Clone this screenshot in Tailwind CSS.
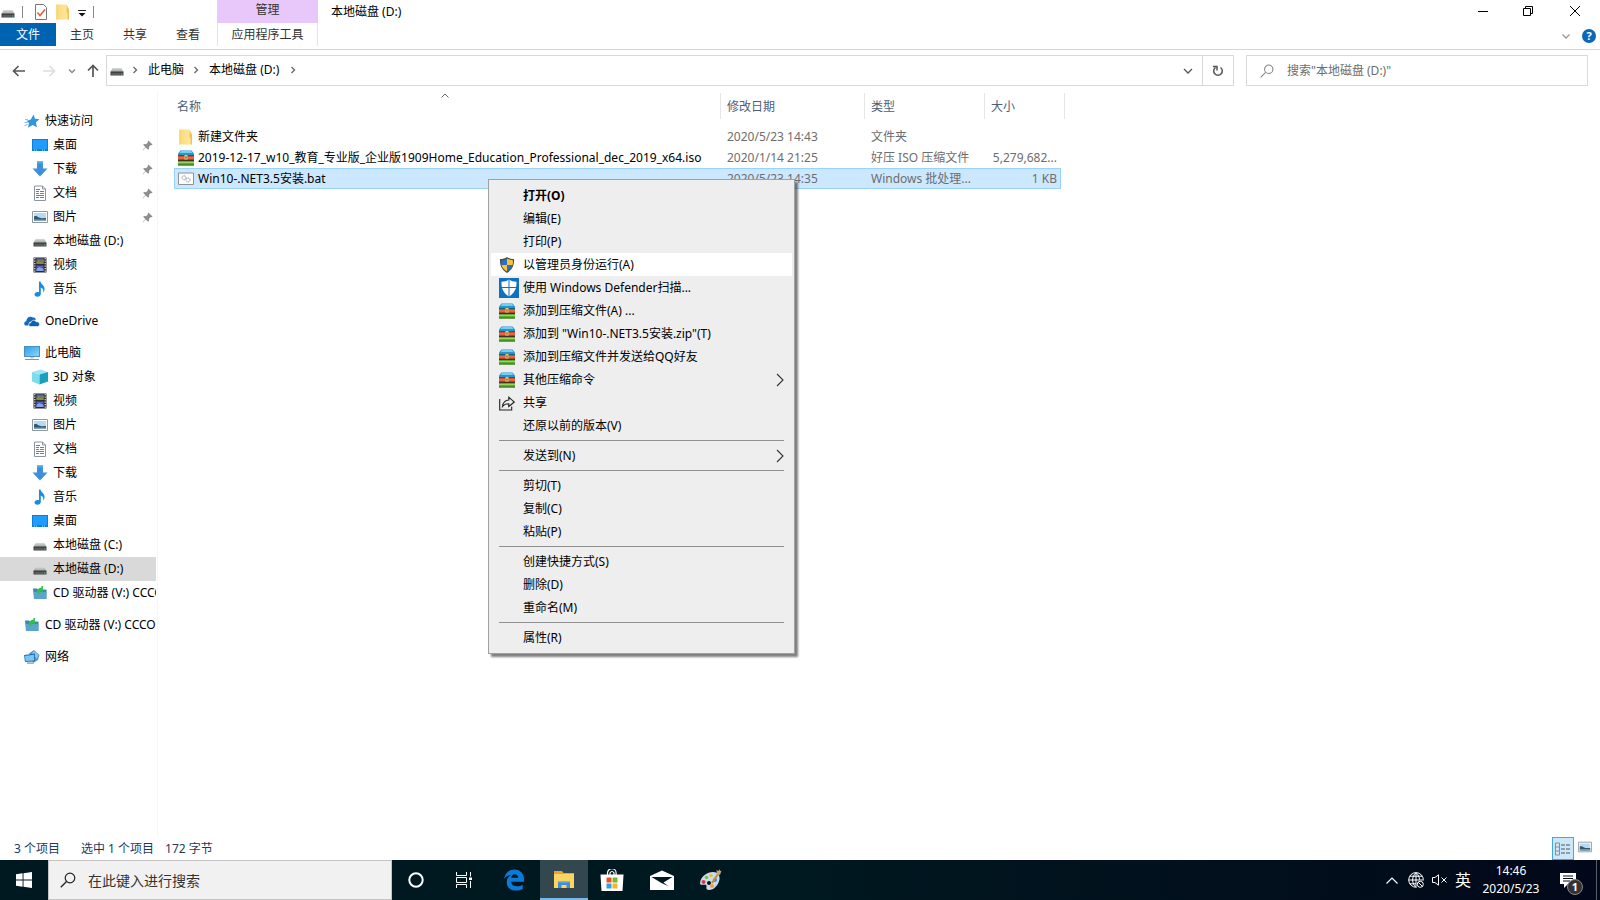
<!DOCTYPE html>
<html lang="zh-CN">
<head>
<meta charset="utf-8">
<title>本地磁盘 (D:)</title>
<script src="https://cdn.jsdelivr.net/npm/@tailwindcss/browser@4"></script>
</head>
<body class="h-screen flex flex-col overflow-hidden bg-white text-black text-[12px] leading-4 font-['Noto_Sans','Noto_Sans_CJK_SC',sans-serif]">

<svg class="absolute w-0 h-0" aria-hidden="true">
  <linearGradient id="g-folder"><stop offset="0" stop-color="#fbd978"/><stop offset="1" stop-color="#ffe9a2"/></linearGradient>
  <linearGradient id="g-screen" x2="1" y2="1"><stop offset="0" stop-color="#2fa0e8"/><stop offset="1" stop-color="#8ad4fb"/></linearGradient>
  <linearGradient id="g-drive" x2="0" y2="1"><stop offset="0" stop-color="#d8d8d8"/><stop offset="1" stop-color="#a0a0a0"/></linearGradient>
  <symbol id="drive" viewBox="0 0 16 16"><path d="M3.500 6h9l2 4h-13z" fill="url(#g-drive)"/><path d="M1.500 9.500h13v4h-13z" fill="#3f4143"/><path d="M2.500 12h9" stroke="#77797b"/><path d="M12 11.500h1.500v1H12z" fill="#5fe07a"/></symbol>
  <symbol id="folder" viewBox="0 0 16 16"><path d="M1.500 .5h10v4l2.500 1v10H1.500z" fill="url(#g-folder)"/><path d="M11.500 .5v8l1 1v6H14V5.500z" fill="#f0c454"/><path d="M1.500 .5h.8v15h-.8z" fill="#f2cb62"/></symbol>
  <symbol id="star" viewBox="0 0 16 16"><path d="M9.500 1.500l1.500 4.300 4.500.4-3.600 3 1 5L8.600 12 4 14.700l1-4.600L2.500 8l4.300-1.500z" fill="#2f96e0"/><path d="M1 6.500l3 .3M.5 9.500h3M.5 12.500l3-1" stroke="#7fbcec"/></symbol>
  <symbol id="desk" viewBox="0 0 16 16"><path d="M0 2h16v12H0z" fill="#0f7fd6"/><path d="M1 3h14v9H1z" fill="#1e9dff"/><path d="M2 13h1m1 0h1m5 0h1m1 0h1" stroke="#b8e2ff"/></symbol>
  <symbol id="down" viewBox="0 0 16 16"><path d="M5 .5h6v7h4.500L8 15.500.5 7.500H5z" fill="#3d8fdc"/><path d="M5 .5h6v2H5z" fill="#5ba6e8"/></symbol>
  <symbol id="doc" viewBox="0 0 16 16"><path d="M2.500 1h8L13.500 4v11.500h-11z" fill="#fff" stroke="#8a97a0"/><path d="M10.500 1v3h3" fill="none" stroke="#8a97a0"/><path d="M4 4.500h4M4 6.500h3M8 6.500h4M4 8.500h3M8 8.500h4M4 10.500h8M4 12.500h3M8 12.500h4" stroke="#3d8dcc"/></symbol>
  <symbol id="pic" viewBox="0 0 16 16"><path d="M.5 2.500h15v11H.5z" fill="#fff" stroke="#8d989f"/><path d="M2 4h12v8H2z" fill="#b4daf6"/><path d="M2 7.500c2-1 3 0 5 1s5 .5 7 .5v3H2z" fill="#35566b"/><path d="M2 10.500h12V12H2z" fill="#7fa6bd"/></symbol>
  <symbol id="film" viewBox="0 0 16 16"><path d="M1.500 .5h13v15h-13z" fill="#2c2c30"/><path d="M2.800 1v14M13.200 1v14" stroke="#e8e8ea" stroke-width="1.200" stroke-dasharray="1.200 1.300"/><path d="M4.500 1.500h7v5.500h-7z" fill="#5a6d9c"/><path d="M4.500 8.500h7V14h-7z" fill="#4a5fc0"/><path d="M4.500 5l2-2 2.500 2 2.500-3v5h-7z" fill="#8a8a3c"/><path d="M4.500 12l3-2 4 2v2h-7z" fill="#8ba0ea"/></symbol>
  <symbol id="music" viewBox="0 0 16 16"><path d="M7 .5h1.500C9 3.500 13 4.500 12.500 8.500c0 1.300-.6 2.300-1.300 3 .6-2.500-.4-4.300-2.400-5V13c0 1.500-1.300 2.700-3.300 2.700C3.500 15.700 2.500 14.700 2.500 13.500 2.500 12 4 11 5.500 11c.6 0 1 0 1.500.2z" fill="#1b8be0"/></symbol>
  <symbol id="cloud" viewBox="0 0 16 16"><path d="M1.500 12.500C-.5 11.500 0 8.500 2.200 8.300 2.500 4.500 6 2.500 9 4.500c1-.3 2.300.2 3 2L5 9.500l-.5 3z" fill="#0f6cbd"/><path d="M6.500 13.500c-2.500-.3-2.300-3.500.2-3.700C7.200 6.800 11 6.300 12.200 8.800c2.300-.3 3.300 1 3.300 2.500s-1 2.200-2 2.200z" fill="#0b62b4" stroke="#fff" stroke-width=".6"/></symbol>
  <symbol id="pc" viewBox="0 0 16 16"><path d="M0 1h16v11H0z" fill="#4b8fc0"/><path d="M1 2h14v9H1z" fill="url(#g-screen)"/><path d="M6 12h4v1.500H6z" fill="#c3d3de"/><path d="M1 14.500h14" stroke="#7f98a8"/></symbol>
  <symbol id="cube" viewBox="0 0 16 16"><path d="M0 3l9-2.500 7 2.500-8.500 2.500z" fill="#9fe6f2"/><path d="M0 3l7.500 2.500v10L0 12.500z" fill="#7fdcea"/><path d="M7.500 5.500L16 3v9.500l-8.500 3z" fill="#17a0c0"/></symbol>
  <symbol id="cd" viewBox="0 0 16 16"><path d="M1 3.500h4l1 1h8.500V14H2z" fill="#3e87b0"/><path d="M2 7h12.500L14 14H2z" fill="#5ba4cc"/><path d="M4.500 7.500c.5-3.500 2.500-4.500 5-5V1H11l-.3 7-1.200-1.500C8 6 7.300 6.500 7.300 9z" fill="#2fc04c"/></symbol>
  <symbol id="net" viewBox="0 0 16 16"><path d="M5 4.500L10 1l5.500 5L14 11l-5 3z" fill="#5a93b8"/><path d="M8 4l2.500-2L14.500 6 13 10z" fill="#8fc4e0"/><path d="M0 6l11-1.500v8L1 13z" fill="#1f78be"/><path d="M1 7l9-1.300v5.800L1.700 12z" fill="#7cc4f2"/><path d="M3 13.200h6l1 1.800H3z" fill="#9db6c6"/></symbol>
  <symbol id="pin" viewBox="0 0 12 12"><path d="M7 .5L11.500 5l-1 .7-1-.2L7.500 7.500l.2 2.200-1 1L4.200 8.300.8 11.500l-.3-.3 3.200-3.400L1.300 5.300l1-1 2.200.2 2-2-.2-1z" fill="#8c8f92"/></symbol>
  <symbol id="zip" viewBox="0 0 16 16"><path d="M2.500 .5h11L16 3.500V6H0V3.500z" fill="#2596cc"/><path d="M3 1h10l1.500 2h-13z" fill="#6fd0f4"/><path d="M0 5h16v1H0z" fill="#16607f"/><path d="M0 6h16v4H0z" fill="#cf4a2e"/><path d="M0 7.300h16v1.200H0z" fill="#ee7a58"/><path d="M0 9.800h16v1.200H0z" fill="#3c3420"/><path d="M0 11h16v4.500H0z" fill="#5fae33"/><path d="M0 12h16v1H0z" fill="#9bd45c"/><path d="M0 14.500h16v1H0z" fill="#2f6f1d"/><path d="M6.500 5h3v4.500h-3z" fill="#f0c96a"/><path d="M7.500 6.500h1v2h-1z" fill="#5a3a1a"/></symbol>
  <symbol id="bat" viewBox="0 0 16 16"><path d="M.5 2h15v11.500H.5z" fill="#fdfdfd" stroke="#8b9299"/><g fill="none" stroke="#929aa2"><circle cx="6" cy="6.800" r="2" stroke-dasharray="1.200 .5"/><circle cx="10" cy="9" r="2" stroke-dasharray="1.200 .5"/></g></symbol>
  <symbol id="shield" viewBox="0 0 16 16"><path d="M8 0c2 1.500 4 2 7 2 .3 6.500-1.500 10.500-7 14C2.500 12.500 .7 8.500 1 2 4 2 6 1.500 8 0z" fill="#4a4a46"/><path d="M8 1.400V8H2.400C2 6.500 2 5 2.100 3.200 4.300 3.200 6.500 2.500 8 1.400z" fill="#2a6fc4"/><path d="M8 1.400V8h5.600c.4-1.500.4-3 .3-4.800-2.200 0-4.400-.7-5.900-1.800z" fill="#f5c53a"/><path d="M8 8v6.600C5 12.700 3.200 10.700 2.400 8z" fill="#f5c53a"/><path d="M8 8v6.600c3-1.900 4.800-3.900 5.600-6.600z" fill="#2a6fc4"/></symbol>
  <symbol id="defender" viewBox="0 0 20 20"><path d="M0 0h20v20H0z" fill="#0e70c0"/><path d="M10 1.500c2.200 1.700 4.500 2.200 7.500 2.200.3 6.500-1.500 11-7.500 14.800C4 14.700 2.200 10.200 2.500 3.700c3 0 5.300-.5 7.500-2.200z" fill="#fff"/><path d="M10 1.500v17M2.500 9.500h15" stroke="#0e70c0"/></symbol>
  <symbol id="share" viewBox="0 0 16 16"><path d="M.7 4v11h12v-3.500M3.500 11.500C4 7.500 6 5.300 9.800 5V2.200L15.300 7l-5.500 4.500V8.800C7 8.800 5 9.500 3.500 11.500z" fill="none" stroke="#222" stroke-width="1.100"/></symbol>
  <symbol id="right" viewBox="0 0 8 14"><path d="M1 1l6 6-6 6" fill="none" stroke="#333" stroke-width="1.100"/></symbol>
  <symbol id="crumb" viewBox="0 0 6 8"><path d="M1.500 1l3 3-3 3" fill="none" stroke="#666" stroke-width="1.300"/></symbol>
  <symbol id="lens" viewBox="0 0 16 16"><circle cx="10" cy="6" r="4.800" fill="none" stroke="currentColor" stroke-width="1.200"/><path d="M6.500 9.500L.8 15.200" stroke="currentColor" stroke-width="1.300"/></symbol>
</svg>

<!-- Title bar and ribbon tabs -->
<header class="relative shrink-0 h-[50px] border-b border-[#d5d6d7] flex justify-between">
  <div class="flex">
    <div class="w-[217px] flex flex-col">
      <div class="h-[23px] flex items-center gap-[6px]">
        <svg class="w-4 h-4"><use href="#drive"/></svg>
        <span class="w-px h-3 bg-[#888]"></span>
        <button aria-label="属性" class="ml-[4px]"><svg class="w-4 h-4" viewBox="0 0 16 16"><path d="M2.500 .5h8l3 3v12h-11z" fill="#fff" stroke="#777"/><path d="M4.500 8.500l2.500 3 5-6" fill="none" stroke="#e0603a" stroke-width="1.600"/></svg></button>
        <button aria-label="新建文件夹"><svg class="w-4 h-4"><use href="#folder"/></svg></button>
        <button aria-label="自定义快速访问工具栏" class="ml-px"><svg class="w-2 h-4" viewBox="0 0 8 16"><path d="M0 6.500h8" stroke="#222"/><path d="M.5 9h7L4 12.500z" fill="#111"/></svg></button>
        <span class="w-px h-3 bg-[#888] ml-px"></span>
      </div>
      <div class="h-[23px] flex items-center">
        <button class="w-14 h-full bg-[#0063b1] text-white pt-px">文件</button>
        <button class="w-[52px] h-full text-[#333] pt-px">主页</button>
        <button class="w-[54px] h-full text-[#333] pt-px">共享</button>
        <button class="w-[52px] h-full text-[#333] pt-px">查看</button>
      </div>
    </div>
    <div class="w-[101px] flex flex-col">
      <div class="h-[23px] bg-[#e8c8fa] pb-[3px] flex items-center justify-center text-[#333]">管理</div>
      <button class="h-[23px] border-x border-[#e4e4e4] text-[#333] pt-px">应用程序工具</button>
    </div>
    <h1 class="pl-[13px] pt-1">本地磁盘 (D:)</h1>
  </div>
  <div class="flex flex-col items-end justify-between">
    <div class="flex h-[21px] items-center">
      <button aria-label="最小化" class="w-[45px] grid place-items-center"><svg class="w-[10px] h-[10px]" viewBox="0 0 10 10"><path d="M0 5.500h10" stroke="#000"/></svg></button>
      <button aria-label="还原" class="w-[45px] grid place-items-center"><svg class="w-[10px] h-[10px]" viewBox="0 0 10 10" fill="none" stroke="#000"><path d="M.5 2.500h7v7h-7zM2.500 2.500v-2h7v7h-2"/></svg></button>
      <button aria-label="关闭" class="w-[50px] grid place-items-center"><svg class="w-[10px] h-[10px]" viewBox="0 0 10 10"><path d="M0 0l10 10M10 0L0 10" stroke="#000"/></svg></button>
    </div>
    <div class="flex items-center gap-3 pr-1 pb-[6px]">
      <button aria-label="展开功能区"><svg class="w-2 h-[14px]" viewBox="0 0 8 14"><path d="M.5 5.500L4 9l3.500-3.500" fill="none" stroke="#999" stroke-width="1.300"/></svg></button>
      <button aria-label="帮助" class="w-[14px] h-[14px] rounded-full bg-[#0b66b8] text-white text-[11px] leading-[14px] font-bold">?</button>
    </div>
  </div>
</header>

<!-- Address bar -->
<div class="shrink-0 flex h-[31px] mt-[5px] pr-3">
  <div class="w-[106px] flex items-center pl-3 text-[#555]">
    <button aria-label="后退"><svg class="w-[14px] h-[14px]" viewBox="0 0 14 14"><path d="M13 7H2M6.500 2L1.500 7l5 5" fill="none" stroke="#555" stroke-width="1.600"/></svg></button>
    <button aria-label="前进" class="ml-4"><svg class="w-[14px] h-[14px]" viewBox="0 0 14 14"><path d="M1 7h11M7.500 2l5 5-5 5" fill="none" stroke="#ddd" stroke-width="1.600"/></svg></button>
    <button aria-label="最近位置" class="ml-3"><svg class="w-2 h-2" viewBox="0 0 8 8"><path d="M1 2.500l3 3 3-3" fill="none" stroke="#888" stroke-width="1.500"/></svg></button>
    <button aria-label="上移" class="ml-[10px]"><svg class="w-[14px] h-[14px]" viewBox="0 0 14 14"><path d="M7 13V2M2 6.500l5-5 5 5" fill="none" stroke="#555" stroke-width="1.700"/></svg></button>
  </div>
  <div class="grow flex border border-[#d9d9d9]">
    <nav aria-label="地址" class="grow flex items-center pl-[2px] pb-px">
      <svg class="w-4 h-4"><use href="#drive"/></svg>
      <svg class="w-[6px] h-2 ml-[7px]"><use href="#crumb"/></svg>
      <a href="#" class="ml-[10px]">此电脑</a>
      <svg class="w-[6px] h-2 ml-[9px]"><use href="#crumb"/></svg>
      <a href="#" class="ml-[10px]">本地磁盘 (D:)</a>
      <svg class="w-[6px] h-2 ml-[11px]"><use href="#crumb"/></svg>
    </nav>
    <button aria-label="以前的位置" class="w-[28px] grid place-items-center"><svg class="w-[10px] h-[10px]" viewBox="0 0 10 10"><path d="M1 3l4 4 4-4" fill="none" stroke="#555" stroke-width="1.300"/></svg></button>
    <button aria-label="刷新" class="w-[31px] border-l border-[#d9d9d9] grid place-items-center"><svg class="w-3 h-3" viewBox="0 0 12 12" fill="none" stroke="#555" stroke-width="1.500"><path d="M8.500 2.500a4.300 4.300 0 1 1-5 0M1 1.500h4v4"/></svg></button>
  </div>
  <div class="w-[342px] ml-3 border border-[#d9d9d9] flex items-center">
    <svg class="w-[14px] h-[14px] ml-[13px] text-[#888]"><use href="#lens"/></svg>
    <input type="text" aria-label="搜索" placeholder="搜索&quot;本地磁盘 (D:)&quot;" class="grow ml-[13px] outline-none placeholder:text-[#6d6d6d]">
  </div>
</div>

<main class="grow min-h-0 flex">
  <!-- Navigation pane -->
  <nav aria-label="导航窗格" class="w-[158px] shrink-0 mt-[5px] pt-[18px] pr-px border-r border-[#f7f7f7] overflow-hidden whitespace-nowrap flex flex-col gap-2 [&_a]:flex [&_a]:h-6 [&_a]:items-center [&_a]:gap-[5px] [&_a]:pl-8 [&_a]:overflow-hidden [&_svg]:shrink-0 [&_svg]:w-4 [&_svg]:h-4">
    <div>
      <a href="#" class="pl-6!"><svg><use href="#star"/></svg>快速访问</a>
      <a href="#"><svg><use href="#desk"/></svg>桌面<svg class="w-[11px]! h-[11px]! ml-auto mr-[3px]"><use href="#pin"/></svg></a>
      <a href="#"><svg><use href="#down"/></svg>下载<svg class="w-[11px]! h-[11px]! ml-auto mr-[3px]"><use href="#pin"/></svg></a>
      <a href="#"><svg><use href="#doc"/></svg>文档<svg class="w-[11px]! h-[11px]! ml-auto mr-[3px]"><use href="#pin"/></svg></a>
      <a href="#"><svg><use href="#pic"/></svg>图片<svg class="w-[11px]! h-[11px]! ml-auto mr-[3px]"><use href="#pin"/></svg></a>
      <a href="#"><svg><use href="#drive"/></svg>本地磁盘 (D:)</a>
      <a href="#"><svg><use href="#film"/></svg>视频</a>
      <a href="#"><svg><use href="#music"/></svg>音乐</a>
    </div>
    <div><a href="#" class="pl-6!"><svg><use href="#cloud"/></svg>OneDrive</a></div>
    <div>
      <a href="#" class="pl-6!"><svg><use href="#pc"/></svg>此电脑</a>
      <a href="#"><svg><use href="#cube"/></svg>3D 对象</a>
      <a href="#"><svg><use href="#film"/></svg>视频</a>
      <a href="#"><svg><use href="#pic"/></svg>图片</a>
      <a href="#"><svg><use href="#doc"/></svg>文档</a>
      <a href="#"><svg><use href="#down"/></svg>下载</a>
      <a href="#"><svg><use href="#music"/></svg>音乐</a>
      <a href="#"><svg><use href="#desk"/></svg>桌面</a>
      <a href="#"><svg><use href="#drive"/></svg>本地磁盘 (C:)</a>
      <a href="#" class="bg-[#d9d9d9]" aria-current="page"><svg><use href="#drive"/></svg>本地磁盘 (D:)</a>
      <a href="#"><svg><use href="#cd"/></svg>CD 驱动器 (V:) CCCOMA</a>
    </div>
    <div><a href="#" class="pl-6!"><svg><use href="#cd"/></svg>CD 驱动器 (V:) CCCOMA</a></div>
    <div><a href="#" class="pl-6!"><svg><use href="#net"/></svg>网络</a></div>
  </nav>

  <!-- File list -->
  <section class="grow min-w-0 pl-4 pt-[7px]">
    <table class="table-fixed border-separate border-spacing-0 whitespace-nowrap text-left text-[#6d6d6d] [&_td]:h-[21px] [&_td]:p-0 [&_th]:p-0 [&_th]:font-normal">
      <colgroup><col class="w-[547px]"><col class="w-[144px]"><col class="w-[120px]"><col class="w-[76px]"><col class="w-[4px]"></colgroup>
      <thead class="text-[#4c607a]">
        <tr class="[&_th]:h-[26px] [&_th]:border-r [&_th]:border-[#e5e5e5]">
          <th class="relative pl-[3px]! pt-[2px]!">名称<svg class="absolute left-[267px] top-0 w-2 h-[5px]" viewBox="0 0 8 5"><path d="M.5 4.500L4 1l3.500 3.500" fill="none" stroke="#666"/></svg></th>
          <th class="pl-[6px]! pt-[2px]!">修改日期</th>
          <th class="pl-[6px]! pt-[2px]!">类型</th>
          <th colspan="2" class="pl-[6px]! pt-[2px]!">大小</th>
        </tr>
      </thead>
      <tbody>
        <tr><td colspan="5" class="h-[7px]!"></td></tr>
        <tr>
          <td class="pl-[4px]! text-black"><span class="flex items-center gap-1"><svg class="w-4 h-4"><use href="#folder"/></svg>新建文件夹</span></td>
          <td class="pl-[6px]!">2020/5/23 14:43</td><td class="pl-[6px]!">文件夹</td><td></td>
        </tr>
        <tr>
          <td class="pl-[4px]! text-black"><span class="flex items-center gap-1"><svg class="w-4 h-4"><use href="#zip"/></svg>2019-12-17_w10_教育_专业版_企业版1909Home_Education_Professional_dec_2019_x64.iso</span></td>
          <td class="pl-[6px]!">2020/1/14 21:25</td><td class="pl-[6px]!">好压 ISO 压缩文件</td><td class="pr-[4px]! text-right">5,279,682...</td>
        </tr>
        <tr class="[&>td]:bg-[#cce8ff] [&>td]:border-y [&>td]:border-[#99d1ff]">
          <td class="pl-[3px]! text-black border-l"><span class="flex items-center gap-1"><svg class="w-4 h-4"><use href="#bat"/></svg>Win10-.NET3.5安装.bat</span></td>
          <td class="pl-[6px]!">2020/5/23 14:35</td><td class="pl-[6px]!">Windows 批处理...</td><td class="pr-[3px]! border-r text-right">1 KB</td>
        </tr>
      </tbody>
    </table>
  </section>
</main>

<!-- Status bar -->
<footer class="shrink-0 h-[23px] flex items-center pl-[14px] pr-1 text-[#1e395b]">
  <span>3 个项目</span><span class="ml-[21px]">选中 1 个项目</span><span class="ml-[11px]">172 字节</span>
  <span class="ml-auto flex h-full">
    <button aria-label="详细信息" class="w-[22px] h-full bg-[#cbe8fb] border border-[#4aa5de] grid place-items-center"><svg class="w-4 h-[14px]" viewBox="0 0 16 14" fill="none"><path d="M.5 1h4v12h-4zM.5 5h4M.5 9h4" stroke="#8a8f94"/><path d="M6 3h4m1 0h4M6 7h4m1 0h4M6 11h4m1 0h4" stroke="#555"/></svg></button>
    <button aria-label="大缩略图" class="w-[22px] h-full grid place-items-center pb-1"><svg class="w-[14px] h-[14px]"><use href="#pic"/></svg></button>
  </span>
</footer>

<!-- Taskbar -->
<div class="shrink-0 h-10 flex items-stretch bg-linear-to-r from-[#001820] from-50% to-[#020819] text-white [&>button]:grid [&>button]:place-items-center">
  <button aria-label="开始" class="w-12"><svg class="w-4 h-4" viewBox="0 0 16 16" fill="#fff"><path d="M0 2.200l6.600-.9v6.200H0zM7.500 1.200L16 0v7.500H7.500zM0 8.500h6.600v6.200L0 13.800zM7.500 8.500H16V16l-8.500-1.200z"/></svg></button>
  <label class="w-[344px] bg-[#f1f1f1] border border-[#c4c4c4] flex items-center pl-[11px] text-[#222]">
    <svg class="w-4 h-4 shrink-0"><use href="#lens"/></svg>
    <input type="text" aria-label="在此键入进行搜索" placeholder="在此键入进行搜索" class="grow ml-3 pt-[2px] text-[14px] outline-none placeholder:text-[#333]">
  </label>
  <button aria-label="Cortana" class="w-12"><svg class="w-4 h-4" viewBox="0 0 16 16"><circle cx="8" cy="8" r="6.700" fill="none" stroke="#fff" stroke-width="2"/></svg></button>
  <button aria-label="任务视图" class="w-12"><svg class="w-4 h-4" viewBox="0 0 16 16" fill="none" stroke="#fff"><path d="M.5 0v3.500h10V0M.5 16v-3.500h10V16M.5 5.500h10v5H.5zM14.500 0v4.500M14.500 9v7"/><path d="M13 5.500h3v2.500h-3z" fill="#fff" stroke="none"/></svg></button>
  <button aria-label="Microsoft Edge" class="w-[52px]"><svg class="w-[22px] h-[22px]" viewBox="0 0 22 22"><path d="M1 10C2 4 6 .5 11.500 .5c6 0 9.500 4.500 9.500 9.800v2.500H8c.3 3 2.800 4.500 6 4.500 2.200 0 4-.6 5.700-1.600v4.400c-2 1-4.200 1.500-6.700 1.500-5.500 0-9.300-3-9.300-8.300 0-3.300 1.700-5.800 4.500-7.300C4.500 6.300 2.500 7.500 1 10zM8.200 8.800h6.900c0-2.300-1.200-3.600-3.400-3.600-2 0-3.200 1.500-3.500 3.600z" fill="#0c7ad8"/></svg></button>
  <button aria-label="文件资源管理器" class="w-12 bg-[#33474f] border-b-2 border-[#76b9ed]"><svg class="w-[22px] h-5" viewBox="0 0 22 20"><path d="M1 2h8l1.500 2H21v15H1z" fill="#e8a33a"/><path d="M1 5h20v14H1z" fill="#fcd462"/><path d="M5 12h12v7h-3.500v-3h-5v3H5z" fill="#3f8fd0"/><path d="M5 12h12v1.500H5z" fill="#6cb4ea"/></svg></button>
  <button aria-label="Microsoft Store" class="w-12"><svg class="w-6 h-[22px]" viewBox="0 0 24 22"><path d="M7.500 6V4a4.300 4.300 0 0 1 8.600 0v2M10 6V4c1-2 3-2 4 0v2" fill="none" stroke="#fff" stroke-width="1.200"/><path d="M.5 5.500h23L22.500 22h-21z" fill="#fff"/><path d="M6.500 8.500h5v5h-5z" fill="#e8502c"/><path d="M12.500 8.500h5v5h-5z" fill="#7fb52c"/><path d="M6.500 14.500h5v5h-5z" fill="#2fa0e4"/><path d="M12.500 14.500h5v5h-5z" fill="#f5b52c"/></svg></button>
  <button aria-label="邮件" class="w-[51px]"><svg class="w-6 h-5" viewBox="0 0 24 20"><path d="M0 6L12 .5 24 6v14H0z" fill="#fff"/><path d="M1.500 7h21l-9 5.500 5 3.800-7.500-3.500z" fill="#001820"/></svg></button>
  <button aria-label="画图" class="w-[46px]"><svg class="w-6 h-6" viewBox="0 0 24 24"><path d="M2 15C3 8 9 4 15 4c5 0 7 3.500 6.500 7.500C20.500 17 16 22 11 22c-2.500 0-3-1.500-2.500-3.500.3-1.500-.5-2-2.500-1.800C3.500 17 2 17 2 15z" fill="#c9dce8"/><circle cx="11" cy="15" r="2" fill="#001820"/><circle cx="5.500" cy="14" r="2" fill="#d83a4a"/><circle cx="8.500" cy="9.500" r="1.800" fill="#7cc04c"/><circle cx="13" cy="7.500" r="1.800" fill="#e8c43c"/><circle cx="17" cy="12" r="2" fill="#3f8fd8"/><circle cx="14" cy="18" r="2" fill="#f0a03c"/><path d="M14 15l6-9" stroke="#c98a3c" stroke-width="2"/><path d="M19 6l-.5-4 2 1 1-2 .5 2 1.500-.5L22 7z" fill="#c8a878"/></svg></button>
  <div class="ml-auto flex items-center [&>button]:grid [&>button]:place-items-center [&>button]:h-full">
    <button aria-label="显示隐藏的图标" class="w-6"><svg class="w-3 h-[7px]" viewBox="0 0 12 7"><path d="M.5 6.500L6 1l5.500 5.500" fill="none" stroke="#fff" stroke-width="1.200"/></svg></button>
    <button aria-label="网络" class="w-6"><svg class="w-4 h-4" viewBox="0 0 16 16" fill="none" stroke="#fff"><path d="M8.500 15.200A7.300 7.300 0 1 1 15.300 8.500M8 .7C3.500 4.500 3.500 11.500 8 15.300M8 .7c2.300 2 3.500 4.500 3.500 7M8 .7v14M.7 8h14M1.800 4.200h12.400M1.800 11.800H8"/><circle cx="12.300" cy="12.300" r="3" fill="#020819"/><path d="M10.200 10.200l4.200 4.200"/></svg></button>
    <button aria-label="音量" class="w-[23px]"><svg class="w-[15px] h-3" viewBox="0 0 15 12" fill="none" stroke="#fff"><path d="M.5 3.500H3L6.500 .8v10.400L3 8.500H.5zM9.500 3.500l5 5M14.500 3.500l-5 5"/></svg></button>
    <button aria-label="输入法" class="w-6 text-[16px]">英</button>
    <button class="w-[72px] text-[12px] leading-[18px] content-center"><span>14:46</span><span>2020/5/23</span></button>
    <button aria-label="通知" class="relative w-[42px]">
      <svg class="w-4 h-4" viewBox="0 0 16 16"><path d="M0 1h16v11H8l-4 4v-4H0z" fill="#fff"/><path d="M3 4h10M3 6.500h10M3 9h7" stroke="#020819"/></svg>
      <span class="absolute left-[20px] top-[19px] w-4 h-4 rounded-full bg-[#333] border border-[#888] text-[11px] leading-[14px] font-bold">1</span>
    </button>
    <span class="w-px h-full bg-[#5a6068] ml-[7px] mr-[3px]"></span>
  </div>
</div>

<!-- Context menu -->
<div role="menu" class="absolute left-[488px] top-[179px] w-[307px] bg-[#eee] border border-[#a0a0a0] px-[2px] py-1 shadow-[3px_3px_2px_rgba(0,0,0,0.5)] [&>button]:flex [&>button]:items-center [&>button]:w-full [&>button]:h-[23px] [&>button]:pl-2 [&>button]:pr-2 [&>button]:text-left [&_i]:flex [&_i]:items-center [&_i]:w-6 [&_i]:shrink-0 [&_i>svg]:w-4 [&_i>svg]:h-4 [&>hr]:my-[3px] [&>hr]:mx-2 [&>hr]:border-[#919191]">
  <button role="menuitem" class="font-bold"><i></i>打开(O)</button>
  <button role="menuitem"><i></i>编辑(E)</button>
  <button role="menuitem"><i></i>打印(P)</button>
  <button role="menuitem" class="bg-white"><i><svg><use href="#shield"/></svg></i>以管理员身份运行(A)</button>
  <button role="menuitem"><i><svg class="w-5! h-5!"><use href="#defender"/></svg></i>使用 Windows Defender扫描...</button>
  <button role="menuitem"><i><svg><use href="#zip"/></svg></i>添加到压缩文件(A) ...</button>
  <button role="menuitem"><i><svg><use href="#zip"/></svg></i>添加到 "Win10-.NET3.5安装.zip"(T)</button>
  <button role="menuitem"><i><svg><use href="#zip"/></svg></i>添加到压缩文件并发送给QQ好友</button>
  <button role="menuitem"><i><svg><use href="#zip"/></svg></i>其他压缩命令<svg class="w-2 h-[14px] ml-auto"><use href="#right"/></svg></button>
  <button role="menuitem"><i><svg><use href="#share"/></svg></i>共享</button>
  <button role="menuitem"><i></i>还原以前的版本(V)</button>
  <hr>
  <button role="menuitem"><i></i>发送到(N)<svg class="w-2 h-[14px] ml-auto"><use href="#right"/></svg></button>
  <hr>
  <button role="menuitem"><i></i>剪切(T)</button>
  <button role="menuitem"><i></i>复制(C)</button>
  <button role="menuitem"><i></i>粘贴(P)</button>
  <hr>
  <button role="menuitem"><i></i>创建快捷方式(S)</button>
  <button role="menuitem"><i></i>删除(D)</button>
  <button role="menuitem"><i></i>重命名(M)</button>
  <hr>
  <button role="menuitem"><i></i>属性(R)</button>
</div>
</body>
</html>
